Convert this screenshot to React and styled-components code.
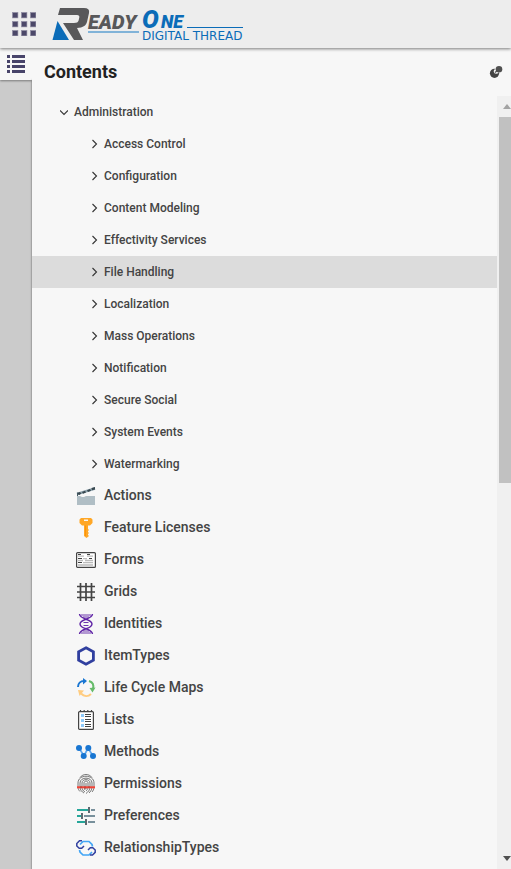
import React, { useState } from "react";
import styled, { createGlobalStyle } from "styled-components";

const GlobalStyle = createGlobalStyle`
  * { box-sizing: border-box; }
  body {
    margin: 0;
    font-family: Roboto, "Liberation Sans", sans-serif;
    font-weight: 500;
    color: #444;
    background: #f7f7f7;
  }
  button { font: inherit; color: inherit; border: 0; margin: 0; cursor: pointer; }
  svg { display: block; flex: none; }
`;

const Page = styled.div`
  display: flex;
  flex-direction: column;
  height: 100vh;
  overflow: hidden;
`;

const Header = styled.header`
  flex: none;
  display: flex;
  align-items: center;
  gap: 16px;
  height: 48px;
  padding: 0 12px;
  background: #ededed;
  box-shadow: 0 1px 3px rgba(0, 0, 0, 0.5);
  z-index: 2;
`;

const IconButton = styled.button`
  display: flex;
  align-items: center;
  justify-content: center;
  padding: 0;
  background: transparent;
`;

const Body = styled.div`
  flex: 1;
  display: flex;
  min-height: 0;
`;

const Rail = styled.aside`
  flex: none;
  width: 32px;
  background: #cbcbcb;
`;

const RailTab = styled(IconButton)`
  width: 100%;
  height: 32px;
  background: #f7f7f7;
  box-shadow: 0 1px 2px rgba(0, 0, 0, 0.4);
`;

const Panel = styled.main`
  flex: 1;
  display: flex;
  flex-direction: column;
  min-width: 0;
  background: #f7f7f7;
  box-shadow: 0 32px 2px rgba(0, 0, 0, 0.6);
`;

const PanelHead = styled.div`
  flex: none;
  display: flex;
  align-items: center;
  justify-content: space-between;
  height: 48px;
  padding: 0 8px 0 12px;
`;

const Title = styled.h1`
  margin: 0;
  font-size: 18px;
  line-height: 24px;
  font-weight: 700;
  color: #222;
`;

const Scroller = styled.div`
  flex: 1;
  display: flex;
  min-height: 0;
`;

const Tree = styled.ul`
  flex: 1;
  min-width: 0;
  margin: 0;
  padding: 0;
  list-style: none;
  overflow: hidden;
`;

const SubTree = styled.ul`
  margin: 0;
  padding: 0;
  list-style: none;
`;

const Row = styled.button`
  display: flex;
  align-items: center;
  width: 100%;
  height: 32px;
  padding: 0 0 0 ${(p) => p.$indent}px;
  gap: 6px;
  text-align: left;
  font-size: 12px;
  line-height: 16px;
  background: ${(p) => (p.$selected ? "#dcdcdc" : "transparent")};
`;

const ItemRow = styled(Row)`
  gap: 8px;
  font-size: 14px;
`;

const ItemLabel = styled.span`
  padding-bottom: 2px;
`;

const Bar = styled.div`
  flex: none;
  display: flex;
  flex-direction: column;
  width: 14px;
  padding-left: 2px;
  background: #f0f0f0;
`;

const BarButton = styled(IconButton)`
  flex: none;
  height: 21px;
  justify-content: flex-end;
`;

const BarTrack = styled.div`
  flex: 1;
`;

const Thumb = styled.div`
  height: 50%;
  background: #c1c1c1;
`;

const Chevron = ({ open }) => (
  <svg width="8" height="10" viewBox="0 0 8 10" fill="none" stroke="#333" strokeWidth="1.1">
    <path d={open ? "M0 3.5 4 7.5 8 3.5" : "M2.5 1 6.5 5 2.5 9"} />
  </svg>
);

const AppsIcon = () => (
  <svg width="24" height="24" viewBox="0 0 24 24">
    {[0, 9, 18].map((y) =>
      [0, 9, 18].map((x) => (
        <rect key={`${x}-${y}`} x={x + 0.5} y={y + 0.5} width="5.4" height="5.4" fill="#4c4869" stroke="#8f8da2" strokeWidth=".6" />
      ))
    )}
  </svg>
);

const ListIcon = () => (
  <svg width="18" height="18" viewBox="0 0 18 18" fill="#48446a">
    {[0, 5, 10, 15].map((y) => (
      <path key={y} d={`M0 ${y}h3v3H0zM5 ${y}h13v3H5z`} />
    ))}
  </svg>
);

const PinIcon = () => (
  <svg width="14" height="14" viewBox="0 0 14 14">
    <circle cx="5.5" cy="8.300" r="4.600" fill="#444" />
    <circle cx="7.300" cy="6.300" r="2.500" fill="#f7f7f7" />
    <circle cx="10" cy="4.300" r="3.300" fill="#505050" />
    <path d="m6 7.500 3-2.500" stroke="#505050" strokeWidth="1.200" />
  </svg>
);

const Logo = () => (
  <svg width="194" height="36" viewBox="0 0 194 36" role="img" aria-label="Ready One Digital Thread">
    <path d="M8 2h24q6 0 5 5l-2 9q-1 4-6 5.500l-4 .5L31 34h-9L11 17h11q4 0 4.600-2.500l.7-3Q27.800 9 25 9H6z" fill="#58585a" />
    <path d="M5.500 15 17 34H.5z" fill="#0b6cb8" />
    <g fontFamily="Roboto, sans-serif" fontWeight="900" fontStyle="italic">
      <text x="36" y="23" fontSize="20" fill="#58585a">EADY</text>
      <text x="90" y="22" fontSize="25" fill="#0b6cb8">O</text>
      <text x="109" y="22" fontSize="18" fill="#0b6cb8">NE</text>
    </g>
    <path d="M36 26h51" stroke="#5d9fd0" strokeWidth="1.400" />
    <path d="M135 21.500h56" stroke="#0b6cb8" strokeWidth="1" />
    <text x="90" y="34" fontFamily="DejaVu Sans, sans-serif" fontSize="12" fontWeight="400" fill="#0b6cb8">DIGITAL THREAD</text>
  </svg>
);

const Glyph = ({ children }) => (
  <svg width="20" height="20" viewBox="0 0 20 20" fill="none" aria-hidden="true">
    {children}
  </svg>
);

const glyphs = {
  actions: (
    <>
      <path d="M1 10h3l2 1h2l2-1h9v9H1z" fill="#b0bec5" />
      <path d="M1 8 19 2.500" stroke="#90a4ae" strokeWidth="2.400" />
      <path d="m1 8 2-2 2.500 1-2 2zM6 6l3-1.200 1 1.700-3 1.200zM11 4.200l3-1.200 1 1.700-3 1.200zM15.500 2 19 1v2.500l-3 .8z" fill="#37474f" />
      <path d="M1.500 6.500V10" stroke="#455a64" />
    </>
  ),
  licenses: (
    <>
      <path fillRule="evenodd" d="M5 0h10l1.500 1.500V5L14 7.500h-2V11l1 1-1 1v1l1 1-1 1v1l1 1-2.500 2L8 18V7.500H6L3.500 5V1.500zM8 1.500V3h4V1.500z" fill="#ffa726" />
      <path d="M9.500 7.500V18" stroke="#fb8c00" strokeWidth=".7" />
    </>
  ),
  forms: (
    <>
      <rect x=".6" y="2.600" width="18.800" height="14.800" rx="1" fill="#fff" stroke="#444" strokeWidth="1.200" />
      <path d="M2 4.500h3M11 4.500h3M2 8.500h4M13 8.500h3M2 12.500h4" stroke="#444" />
      <path d="M2 6.200h6M11 6.200h6M7 8.700h4M2 10.500h5M9 10.500h8M7 12.700h10M2 15h15" stroke="#bbb" strokeWidth="1.300" />
    </>
  ),
  grids: <path d="M4.500 1v18M10 1v18M15.500 1v18M1 4.500h18M1 10h18M1 15.500h18" stroke="#444" strokeWidth="1.700" />,
  identities: (
    <g stroke="#5e22a5" strokeWidth="1.400">
      <path d="M3.500 0C4 6 16 4.500 16 10S4 14 3.500 20M16.500 0C16 6 4 4.500 4 10s12 4 12.500 10" />
      <path d="M5 1h10M7 3h6M7.500 8.500h5M7.500 11.500h5M7 17h6M5 19h10" strokeWidth=".9" />
    </g>
  ),
  itemtypes: <path d="m10 1.800 7.400 4.100v8.200L10 18.200l-7.400-4.100V5.900z" stroke="#303f9f" strokeWidth="2.800" />,
  lifecycle: (
    <>
      <path d="M2 9c0-3.700 2.500-6 6-6" stroke="#1976d2" strokeWidth="2" />
      <path d="m7 0 4 3-4 3.500z" fill="#1976d2" />
      <path d="M13 3c3.500 1 5 4 4 8" stroke="#66bb6a" strokeWidth="2" />
      <path d="m13.500 10 6-.5-3 5z" fill="#66bb6a" />
      <path d="M15 16c-3 3-7 2.500-10-.5" stroke="#ffcc80" strokeWidth="2" />
      <path d="m2 12 6 .5L3.500 18z" fill="#ffcc80" />
    </>
  ),
  lists: (
    <>
      <rect x="2.600" y="1.600" width="14.800" height="17.800" rx="1" fill="#fff" stroke="#444" strokeWidth="1.200" />
      <path d="M4.500 0v2M8.200 0v2M11.800 0v2M15.500 0v2" stroke="#444" strokeWidth="1.200" />
      <path d="M5 4h3v3H5zM5 9h3v3H5zM5 14h3v3H5z" fill="#90caf9" />
      <path d="M9 4.500h6M9 6.500h6M9 9.500h6M9 11.500h6M9 14.500h6M9 16.500h6" stroke="#444" />
    </>
  ),
  methods: (
    <>
      <path d="m3 6 5 8 4-8 5 8" stroke="#64a9ec" strokeWidth="1.800" />
      <g fill="#1976d2">
        <circle cx="3" cy="6" r="3" />
        <circle cx="12.300" cy="6" r="3" />
        <circle cx="7.700" cy="14" r="3" />
        <circle cx="17" cy="14" r="3" />
      </g>
    </>
  ),
  permissions: (
    <>
      <path
        d="M4 3.500C7-.5 13-.5 16 3.500M2 9c0-9 16-9 16 0v4c0 2-1 4-2 5M2 9v4c0 2 1 3.500 2 4.500M4 9c0-6.500 12-6.500 12 0v4c0 3-2 5-3 6M4 9v4c0 3 2 5 4 6M6 9c0-4.500 8-4.500 8 0v4c0 3-2 5-4 6.500M6 9v4c0 2 1 4 3 5M8 9c0-2.500 4-2.500 4 0v4c0 2-1 3-2 4M8 9v4c0 1 1 2 1 3M10 9v6"
        stroke="#555"
        strokeWidth=".8"
      />
      <path d="M1 13.300h18" stroke="#f44336" strokeWidth="2" />
      <path d="M5 12v2M9 12v3M13 12v2" stroke="#993c36" strokeWidth=".7" />
    </>
  ),
  preferences: (
    <>
      <path d="M1 4h11M1 10h4M1 16h8" stroke="#26a69a" strokeWidth="2" />
      <path d="M15 4h4M8 10h11M12 16h7" stroke="#78909c" strokeWidth="1.800" />
      <path d="M13 1v6M6 7v6M10 13v6" stroke="#37474f" strokeWidth="1.600" />
    </>
  ),
  relationships: (
    <>
      <path d="m4 6.500 3-3h6l3 3 .5 2M16 14l-3 3H7l-3-3-.5-2" stroke="#42a5f5" strokeWidth="1.700" />
      <path d="M6 2.800H3.500L.8 5.500V8l2.400 2.200h2.500L8 8M14 17h2.500l2.700-2.600V12l-2.400-2.200h-2.500L12 12" stroke="#303f9f" strokeWidth="1.500" />
    </>
  ),
};

const groups = [
  "Access Control", "Configuration", "Content Modeling", "Effectivity Services", "File Handling",
  "Localization", "Mass Operations", "Notification", "Secure Social", "System Events", "Watermarking",
];

const items = [
  ["actions", "Actions"],
  ["licenses", "Feature Licenses"],
  ["forms", "Forms"],
  ["grids", "Grids"],
  ["identities", "Identities"],
  ["itemtypes", "ItemTypes"],
  ["lifecycle", "Life Cycle Maps"],
  ["lists", "Lists"],
  ["methods", "Methods"],
  ["permissions", "Permissions"],
  ["preferences", "Preferences"],
  ["relationships", "RelationshipTypes"],
];

export default function App() {
  const [selected, setSelected] = useState("File Handling");
  const [open, setOpen] = useState(true);

  return (
    <Page>
      <GlobalStyle />
      <Header>
        <IconButton aria-label="Applications"><AppsIcon /></IconButton>
        <Logo />
      </Header>
      <Body>
        <Rail>
          <RailTab aria-label="Contents"><ListIcon /></RailTab>
        </Rail>
        <Panel>
          <PanelHead>
            <Title>Contents</Title>
            <IconButton aria-label="Pin panel"><PinIcon /></IconButton>
          </PanelHead>
          <Scroller>
            <Tree>
              <li>
                <Row $indent={28} aria-expanded={open} onClick={() => setOpen(!open)}>
                  <Chevron open={open} />
                  Administration
                </Row>
                {open && (
                  <SubTree>
                    {groups.map((name) => (
                      <li key={name}>
                        <Row $indent={58} $selected={selected === name} aria-expanded={false} onClick={() => setSelected(name)}>
                          <Chevron />
                          {name}
                        </Row>
                      </li>
                    ))}
                    {items.map(([icon, name]) => (
                      <li key={name}>
                        <ItemRow $indent={44} $selected={selected === name} onClick={() => setSelected(name)}>
                          <Glyph>{glyphs[icon]}</Glyph>
                          <ItemLabel>{name}</ItemLabel>
                        </ItemRow>
                      </li>
                    ))}
                  </SubTree>
                )}
              </li>
            </Tree>
            <Bar>
              <BarButton aria-label="Scroll up">
                <svg width="8" height="5" viewBox="0 0 8 5"><path d="M0 5 4 0l4 5z" fill="#a3a3a3" /></svg>
              </BarButton>
              <BarTrack><Thumb /></BarTrack>
              <BarButton aria-label="Scroll down">
                <svg width="8" height="5" viewBox="0 0 8 5"><path d="M0 0h8L4 5z" fill="#505050" /></svg>
              </BarButton>
            </Bar>
          </Scroller>
        </Panel>
      </Body>
    </Page>
  );
}
